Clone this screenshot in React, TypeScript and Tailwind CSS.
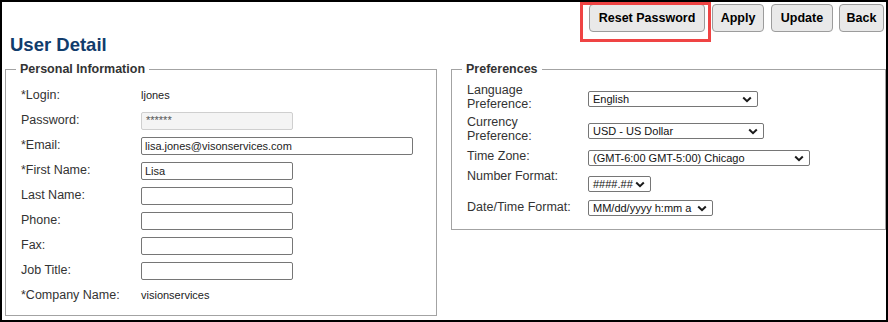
import React from "react";

const font = { fontFamily: '"Liberation Sans", Arial, sans-serif' };

type Row = {
  label: string;
  kind: "text" | "password" | "input";
  value?: string;
  wide?: boolean;
};

const personalRows: Row[] = [
  { label: "*Login:", kind: "text", value: "ljones" },
  { label: "Password:", kind: "password", value: "******" },
  { label: "*Email:", kind: "input", value: "lisa.jones@visonservices.com", wide: true },
  { label: "*First Name:", kind: "input", value: "Lisa" },
  { label: "Last Name:", kind: "input", value: "" },
  { label: "Phone:", kind: "input", value: "" },
  { label: "Fax:", kind: "input", value: "" },
  { label: "Job Title:", kind: "input", value: "" },
  { label: "*Company Name:", kind: "text", value: "visionservices" },
];

type Pref = {
  label: string[];
  value: string;
  width: string;
  rowH: string;
  selTop: string;
};

const prefRows: Pref[] = [
  { label: ["Language", "Preference:"], value: "English", width: "w-[170px]", rowH: "h-[32px]", selTop: "mt-[7px]" },
  { label: ["Currency", "Preference:"], value: "USD - US Dollar", width: "w-[176px]", rowH: "h-[34px]", selTop: "mt-[7px]" },
  { label: ["Time Zone:"], value: "(GMT-6:00 GMT-5:00) Chicago", width: "w-[222px]", rowH: "h-[20px]", selTop: "mt-0" },
  { label: ["Number Format:"], value: "####.##", width: "w-[63px]", rowH: "h-[31px]", selTop: "mt-[6px]" },
  { label: ["Date/Time Format:"], value: "MM/dd/yyyy h:mm a", width: "w-[125px]", rowH: "h-[15px]", selTop: "-mt-[1px]" },
];

function Chevron() {
  return (
    <svg width="10" height="7" viewBox="0 0 10 7" className="shrink-0">
      <polyline points="1.2,1.5 5,5.2 8.8,1.5" fill="none" stroke="#1a1a1a" strokeWidth="2" />
    </svg>
  );
}

function FakeSelect({ value, width }: { value: string; width: string }) {
  return (
    <div
      className={`${width} h-[16px] flex items-center justify-between border border-[#767676] rounded-[2px] bg-white pl-[4px] pr-[5px] text-[11px] text-[#111] leading-none`}
    >
      <span className="whitespace-nowrap">{value}</span>
      <Chevron />
    </div>
  );
}

function ToolButton({ label, width }: { label: string; width: string }) {
  return (
    <button
      className={`${width} h-[28px] rounded-[4px] border border-[#9c9c9c] bg-[#e9e9e9] text-[12.5px] font-bold text-black`}
    >
      {label}
    </button>
  );
}

export default function App() {
  return (
    <div style={font} className="relative w-[888px] h-[322px] border-2 border-black bg-white overflow-hidden">
      {/* highlight box over the reset button */}
      <div className="absolute left-[578px] top-0 w-[131px] h-[40px] border-[3px] border-[#ef4444]" />

      <div className="flex justify-end pt-[2px] pr-[2px]">
        <ToolButton label="Reset Password" width="w-[116px]" />
        <div className="ml-[7px]">
          <ToolButton label="Apply" width="w-[52px]" />
        </div>
        <div className="ml-[7px]">
          <ToolButton label="Update" width="w-[62px]" />
        </div>
        <div className="ml-[6px]">
          <ToolButton label="Back" width="w-[45px]" />
        </div>
      </div>

      <h1 className="mt-[1px] pl-[8px] text-[18.5px] leading-[24px] font-bold text-[#113c6c]">User Detail</h1>

      <div className="flex items-start mt-[5px]">
        <fieldset className="ml-[3px] w-[432px] border border-[#a3a3a3] pt-[6px] pb-[7px] pl-[15px]">
          <legend className="ml-[-5px] px-[4px] text-[12.5px] leading-[15px] font-bold text-[#333]">
            Personal Information
          </legend>
          {personalRows.map((r) => (
            <div key={r.label} className="flex items-center h-[25px]">
              <div className="w-[120px] text-[12.5px] text-[#333]">{r.label}</div>
              {r.kind === "text" && <div className="text-[11px] text-[#222]">{r.value}</div>}
              {r.kind === "password" && (
                <div className="w-[152px] h-[18px] flex items-center border border-[#cfcfcf] rounded-[2px] bg-[#f4f4f4] pl-[4px] text-[11px] text-[#555]">
                  {r.value}
                </div>
              )}
              {r.kind === "input" && (
                <input
                  readOnly
                  value={r.value}
                  className={`${r.wide ? "w-[272px]" : "w-[152px]"} h-[18px] border border-[#767676] rounded-[2px] bg-white px-[3px] text-[11px] text-[#222] outline-none`}
                />
              )}
            </div>
          ))}
        </fieldset>

        <fieldset className="ml-[14px] w-[435px] border border-[#a3a3a3] pt-[7px] pb-[13px] pl-[15px]">
          <legend className="ml-[-5px] px-[4px] text-[12.5px] leading-[15px] font-bold text-[#333]">
            Preferences
          </legend>
          {prefRows.map((p) => (
            <div key={p.value} className={`flex items-start ${p.rowH}`}>
              <div className="w-[121px] text-[12.5px] leading-[13.5px] text-[#333]">
                {p.label.map((l) => (
                  <div key={l}>{l}</div>
                ))}
              </div>
              <div className={p.selTop}>
                <FakeSelect value={p.value} width={p.width} />
              </div>
            </div>
          ))}
        </fieldset>
      </div>
    </div>
  );
}
